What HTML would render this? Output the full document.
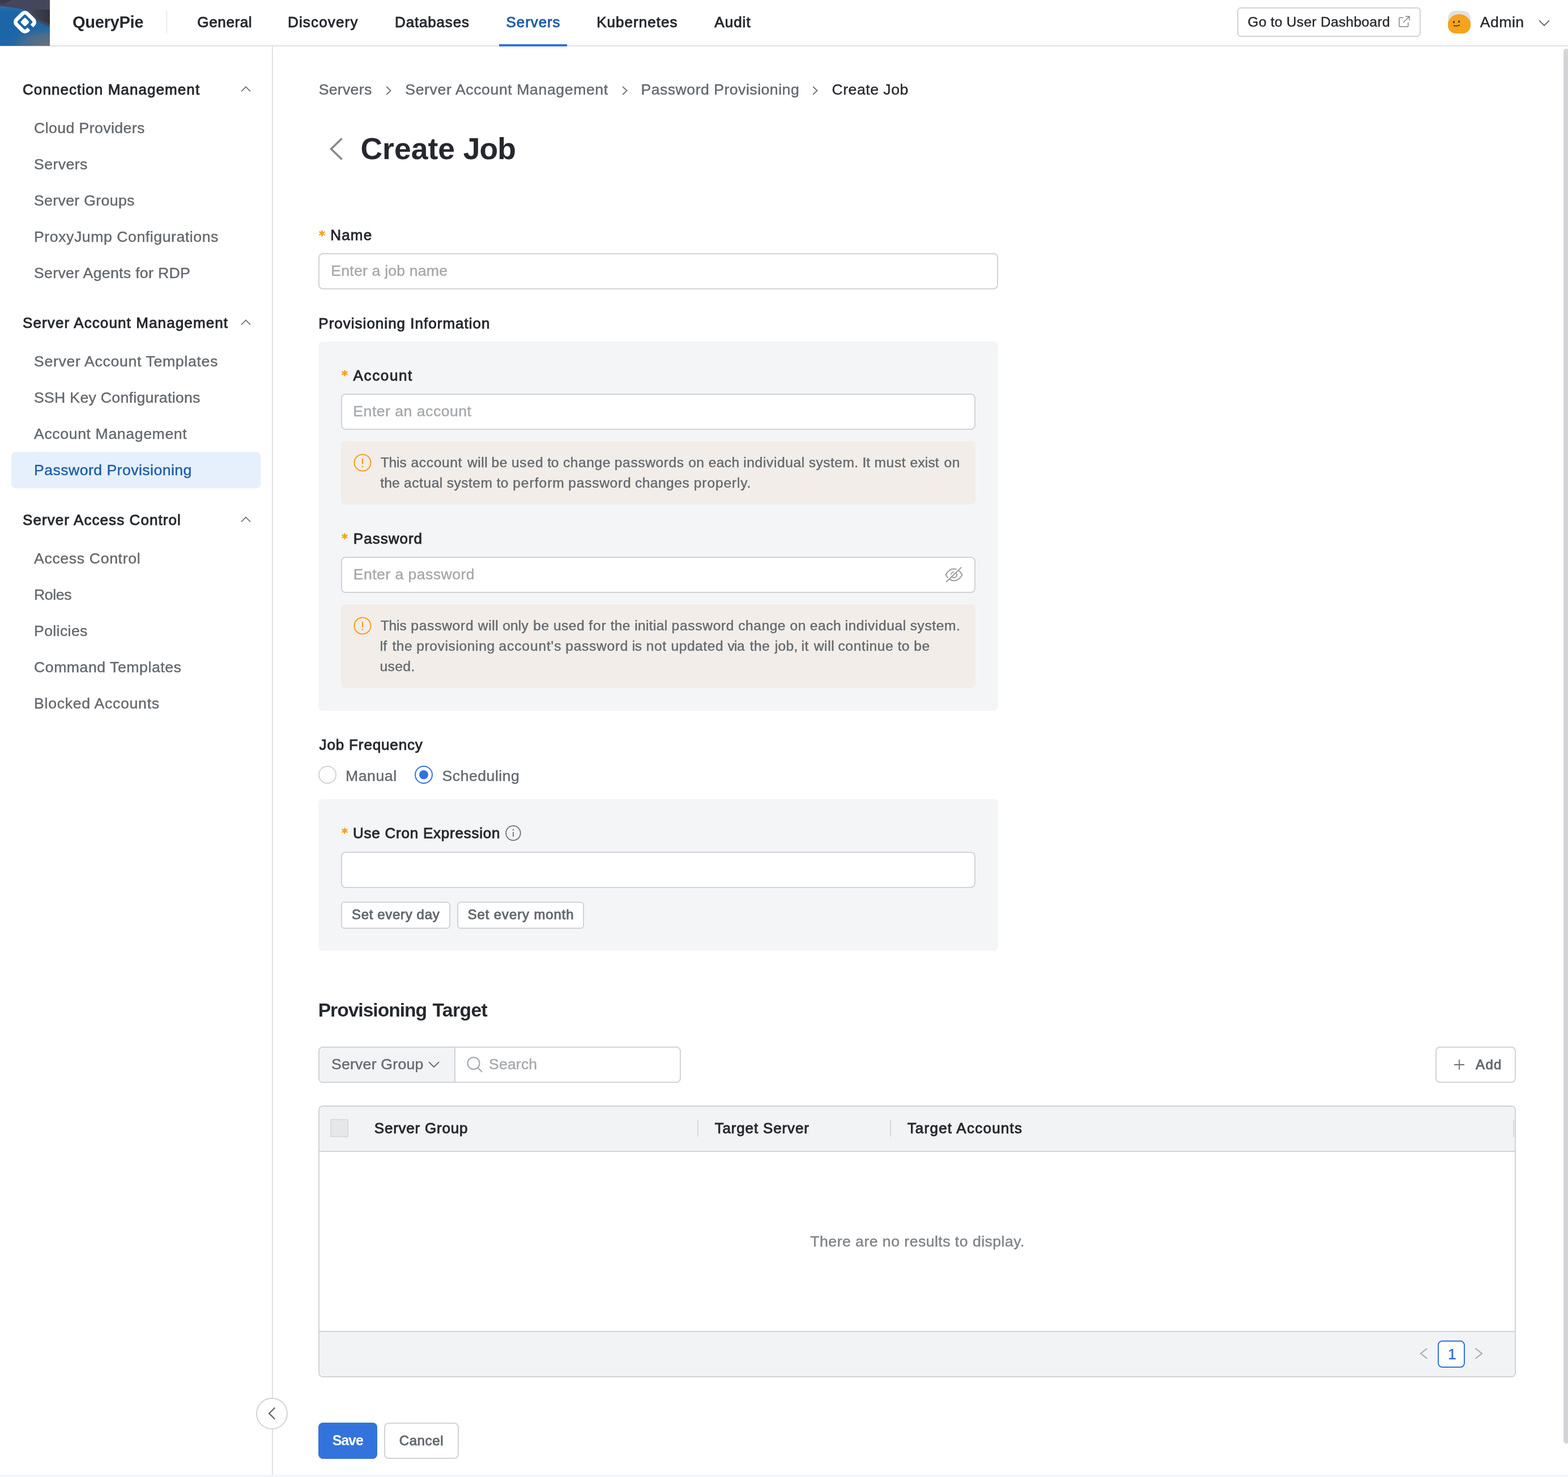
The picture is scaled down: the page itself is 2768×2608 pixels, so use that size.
<!DOCTYPE html>
<html lang="en">
<head>
<meta charset="utf-8">
<title>QueryPie - Create Job</title>
<style>
*{box-sizing:border-box;margin:0;padding:0}
html,body{width:2768px;height:2608px;overflow:hidden;background:#fff}
body{font-family:"Liberation Sans",Arial,sans-serif;font-size:27px;color:#24272c;position:relative}
#app{position:absolute;left:0;top:0;width:2768px;height:2608px;will-change:transform}
@media (max-width:1400px){html{zoom:.5}}
svg{display:block;position:absolute;overflow:visible}
a{text-decoration:none}
h1,h2{font-weight:700}
.t{position:absolute;white-space:pre;font-weight:400;display:block}
.r{-webkit-text-stroke:0.4px currentColor}
.m{-webkit-text-stroke:0.9px currentColor}
.sb{}
.b{}
.p{position:absolute}
/* header */
#hdr{left:0;top:0;width:2768px;height:82px;border-bottom:2px solid #dddfe3;background:#fff}
#logo{left:0;top:0;width:88px;height:81px;overflow:hidden;background:#1c66a8;z-index:2}
#hdiv{left:293.5px;top:19px;width:1.2px;height:40px;background:#dcdee2}
#navline{left:881px;top:78px;width:120px;height:4px;background:#3273dc}
#dash{left:2184px;top:13px;width:324px;height:52px;border:2px solid #d1d3d8;border-radius:6px;background:#fff}
#avatar{left:2556px;top:19px;width:40px;height:40px;border-radius:14px;background:#dfe1e6;overflow:hidden}
#avatar i{position:absolute;left:-1px;top:5.5px;width:42px;height:42px;border-radius:50%;background:#f7a31c}
/* sidebar */
#side{left:0;top:82px;width:482px;height:2526px;border-right:2px solid #dfe1e5;background:#fff}
#sel{left:20px;top:798px;width:440px;height:64px;border-radius:8px;background:#e6f0fc}
#collapse{left:452px;top:2468px;width:56px;height:56px;border-radius:50%;border:2px solid #d1d3d8;background:#fff}
/* content */
.inp{height:64px;border:2px solid #d1d3d8;border-radius:8px;background:#fff}
.box{left:562px;width:1200px;background:#f4f5f7;border-radius:8px}
.alert{left:602px;width:1120px;background:#f2ede8;border-radius:8px}
.sbtn{top:1592px;height:48px;border:2px solid #d1d3d8;border-radius:6px;background:#fff}
.radio{top:1352px;width:32px;height:32px;border-radius:50%;border:2px solid #d1d3d8;background:#fff}
.radio.on{border-color:#3273dc}
.radio.on i{position:absolute;left:6px;top:6px;width:16px;height:16px;border-radius:50%;background:#3273dc}
#filter{left:562px;top:1848px;width:640px;height:64px;border:2px solid #d1d3d8;border-radius:8px;background:#fff;overflow:hidden}
#filter b{position:absolute;left:0;top:0;width:240px;height:60px;background:#f2f3f5;border-right:2px solid #d1d3d8}
#addbtn{left:2534px;top:1848px;width:142px;height:64px;border:2px solid #d1d3d8;border-radius:8px;background:#fff}
#tbl{left:562px;top:1952px;width:2114px;height:480px;border:2px solid #d1d3d8;border-radius:8px;background:#fff;overflow:hidden}
#thead{left:0;top:0;width:2110px;height:80px;background:#f2f3f5;border-bottom:2px solid #d1d3d8}
#tfoot{left:0;top:396px;width:2110px;height:80px;background:#f2f3f5;border-top:2px solid #d1d3d8}
.sep{top:1977px;width:2px;height:30px;background:#d6d9de}
#chk{left:583px;top:1976px;width:32px;height:32px;background:#e6e7e9;border:2px solid #d9dbde;border-radius:1px}
#pgbox{left:2538px;top:2367px;width:48px;height:48px;border:2px solid #3273dc;border-radius:8px;background:#fff}
#save{left:562px;top:2512px;width:104px;height:64px;border-radius:8px;background:#3273dc}
#cancel{left:678px;top:2512px;width:132px;height:64px;border-radius:8px;border:2px solid #d1d3d8;background:#fff}
#vscroll{left:2760px;top:86px;width:10px;height:2463px;background:#d2d4d8;border-radius:5px}
#hstrip{left:0;top:2604px;width:2768px;height:4px;background:#f3f5f8}
.ast{position:absolute;color:#f59f1c;font-family:"DejaVu Sans",sans-serif;font-weight:700;font-size:21px;line-height:28px;width:16px;text-align:center;margin-left:-1.5px;margin-top:1.5px;-webkit-text-stroke:0.6px #f59f1c}
</style>
</head>
<body>
<div id="app">
<header class="p" id="hdr">
  <div class="p" id="logo">
    <svg width="88" height="81" viewBox="0 0 88 81">
      <defs>
        <radialGradient id="lg2" cx="1" cy="1" r="0.95"><stop offset="0" stop-color="#6b7074"/><stop offset="0.55" stop-color="#4a6d8d" stop-opacity="0.95"/><stop offset="1" stop-color="#1c66a8" stop-opacity="0"/></radialGradient>
        <linearGradient id="lg3" x1="0" y1="0" x2="1" y2="0"><stop offset="0" stop-color="#2c2d36" stop-opacity="0"/><stop offset="1" stop-color="#2c2d36" stop-opacity="0.75"/></linearGradient>
        <linearGradient id="lg4" x1="0" y1="0" x2="0" y2="1"><stop offset="0" stop-color="#2f74b4" stop-opacity="0.75"/><stop offset="1" stop-color="#1c66a8" stop-opacity="0"/></linearGradient>
      </defs>
      <rect width="88" height="81" fill="#1c66a8"/>
      <rect y="40" width="88" height="41" fill="url(#lg2)"/>
      <path d="M0 0H88V47C80 45 72 41 66 37L46 18C30 14 14 12 0 11Z" fill="#44465b"/>
      <path d="M0 11C14 12 30 14 46 18L34 26C22 22 10 20 0 19Z" fill="url(#lg4)"/>
      <path d="M52 17H88V42C80 40 72 36 66 32Z" fill="url(#lg3)"/>
      <path d="M0 0H20L6 7H0Z" fill="#2c2d36" opacity="0.5"/>
      <g transform="rotate(45 44 38.9)">
        <rect x="30.5" y="25.4" width="27" height="27" rx="6" fill="none" stroke="#fff" stroke-width="6.8"/>
        <rect x="38.2" y="33.1" width="11.6" height="11.6" rx="2.5" fill="#fff"/>
      </g>
      <path d="M50.5 45.4L57.2 52.1" stroke="#1c66a8" stroke-width="7.4" fill="none"/>
    </svg>
  </div>
  <div class="t sb" style="left:127.89px;top:22.00px;font-size:29.12px;line-height:35px;letter-spacing:-0.313px;color:#25282d;font-weight:700">QueryPie</div>
  <div class="p" id="hdiv"></div>
  <nav>
  <a class="t m" style="left:348.35px;top:24.00px;font-size:26.0px;line-height:31px;letter-spacing:0.631px;color:#25282d">General</a>
  <a class="t m" style="left:507.96px;top:24.00px;font-size:26.0px;line-height:31px;letter-spacing:1.167px;color:#25282d">Discovery</a>
  <a class="t m" style="left:697.04px;top:24.00px;font-size:26.0px;line-height:31px;letter-spacing:0.833px;color:#25282d">Databases</a>
  <a class="t m" style="left:893.60px;top:24.00px;font-size:26.0px;line-height:31px;letter-spacing:0.897px;color:#1d5daa">Servers</a>
  <a class="t m" style="left:1053.20px;top:24.00px;font-size:26.0px;line-height:31px;letter-spacing:1.043px;color:#25282d">Kubernetes</a>
  <a class="t m" style="left:1261.33px;top:24.00px;font-size:26.0px;line-height:31px;letter-spacing:1.007px;color:#25282d">Audit</a>
  </nav>
  <div class="p" id="navline"></div>
  <div class="p" id="dash"></div>
  <span class="t r" style="left:2202.53px;top:24.00px;font-size:24.6px;line-height:30px;letter-spacing:0.266px;color:#25282d">Go to User Dashboard</span>
  <svg style="left:2468px;top:27px" width="22" height="22" viewBox="0 0 22 22" fill="none" stroke="#80858c" stroke-width="1.5"><path d="M9.5 4.2H3.2Q2 4.2 2 5.4V18.8Q2 20 3.2 20H16.6Q17.8 20 17.8 18.8V12.5"/><path d="M9.2 12.8L20 2M13 2H20V9"/></svg>
  <div class="p" id="avatar"><i></i>
    <svg style="left:0;top:0" width="40" height="40" viewBox="0 0 40 40"><ellipse cx="10.5" cy="19.9" rx="1.4" ry="1.9" fill="#1c2030"/><ellipse cx="19.6" cy="19.1" rx="1.4" ry="1.9" fill="#1c2030"/><path d="M10.3 26.1Q14.5 28.1 20.7 25.4" stroke="#1c2030" stroke-width="1.3" fill="none" stroke-linecap="round"/></svg>
  </div>
  <span class="t r" style="left:2612.86px;top:23.00px;font-size:26.65px;line-height:32px;letter-spacing:0.421px;color:#25282d">Admin</span>
  <svg style="left:2716px;top:35px" width="20" height="11" viewBox="0 0 20 11" fill="none" stroke="#6c7178" stroke-width="2"><path d="M1 1L10 10L19 1"/></svg>
</header>
<aside class="p" id="side"></aside>
<div class="p" id="sel"></div>
<nav id="sidenav">
<div class="t m" style="left:40.00px;top:143.00px;font-size:26.0px;line-height:31px;letter-spacing:1.079px;color:#25282d">Connection Management</div>
<svg style="left:425px;top:152px" width="18" height="10" viewBox="0 0 18 10" fill="none" stroke="#6e7379" stroke-width="1.7"><path d="M1 9.3L9 1.3L17 9.3"/></svg>
<a class="t r" style="left:60.00px;top:210.00px;font-size:26.65px;line-height:32px;letter-spacing:0.416px;color:#63686e">Cloud Providers</a>
<a class="t r" style="left:60.00px;top:274.00px;font-size:26.65px;line-height:32px;letter-spacing:0.436px;color:#63686e">Servers</a>
<a class="t r" style="left:60.00px;top:338.00px;font-size:26.65px;line-height:32px;letter-spacing:0.347px;color:#63686e">Server Groups</a>
<a class="t r" style="left:60.00px;top:402.00px;font-size:26.65px;line-height:32px;letter-spacing:0.564px;color:#63686e">ProxyJump Configurations</a>
<a class="t r" style="left:60.00px;top:466.00px;font-size:26.65px;line-height:32px;letter-spacing:0.315px;color:#63686e">Server Agents for RDP</a>
<div class="t m" style="left:40.00px;top:555.00px;font-size:26.0px;line-height:31px;letter-spacing:1.115px;color:#25282d">Server Account Management</div>
<svg style="left:425px;top:564px" width="18" height="10" viewBox="0 0 18 10" fill="none" stroke="#6e7379" stroke-width="1.7"><path d="M1 9.3L9 1.3L17 9.3"/></svg>
<a class="t r" style="left:60.00px;top:622.00px;font-size:26.65px;line-height:32px;letter-spacing:0.665px;color:#63686e">Server Account Templates</a>
<a class="t r" style="left:60.00px;top:686.00px;font-size:26.65px;line-height:32px;letter-spacing:0.292px;color:#63686e">SSH Key Configurations</a>
<a class="t r" style="left:60.00px;top:750.00px;font-size:26.65px;line-height:32px;letter-spacing:0.618px;color:#63686e">Account Management</a>
<a class="t r" style="left:60.00px;top:814.00px;font-size:26.65px;line-height:32px;letter-spacing:0.445px;color:#1d5daa">Password Provisioning</a>
<div class="t m" style="left:40.00px;top:903.00px;font-size:26.0px;line-height:31px;letter-spacing:1.084px;color:#25282d">Server Access Control</div>
<svg style="left:425px;top:912px" width="18" height="10" viewBox="0 0 18 10" fill="none" stroke="#6e7379" stroke-width="1.7"><path d="M1 9.3L9 1.3L17 9.3"/></svg>
<a class="t r" style="left:60.00px;top:970.00px;font-size:26.65px;line-height:32px;letter-spacing:0.646px;color:#63686e">Access Control</a>
<a class="t r" style="left:60.00px;top:1034.00px;font-size:26.65px;line-height:32px;letter-spacing:-0.385px;color:#63686e">Roles</a>
<a class="t r" style="left:60.00px;top:1098.00px;font-size:26.65px;line-height:32px;letter-spacing:0.372px;color:#63686e">Policies</a>
<a class="t r" style="left:60.00px;top:1162.00px;font-size:26.65px;line-height:32px;letter-spacing:0.539px;color:#63686e">Command Templates</a>
<a class="t r" style="left:60.00px;top:1226.00px;font-size:26.65px;line-height:32px;letter-spacing:0.720px;color:#63686e">Blocked Accounts</a>
</nav>
<main>
<a class="t r" style="left:562.65px;top:142.00px;font-size:26.65px;line-height:32px;letter-spacing:0.301px;color:#63686e">Servers</a>
<svg style="left:681px;top:152px" width="10" height="16" viewBox="0 0 10 16" fill="none" stroke="#6c7178" stroke-width="1.8"><path d="M1.2 1L8.6 8L1.2 15"/></svg>
<a class="t r" style="left:715.32px;top:142.00px;font-size:26.65px;line-height:32px;letter-spacing:0.596px;color:#63686e">Server Account Management</a>
<svg style="left:1098px;top:152px" width="10" height="16" viewBox="0 0 10 16" fill="none" stroke="#6c7178" stroke-width="1.8"><path d="M1.2 1L8.6 8L1.2 15"/></svg>
<a class="t r" style="left:1131.41px;top:142.00px;font-size:26.65px;line-height:32px;letter-spacing:0.490px;color:#63686e">Password Provisioning</a>
<svg style="left:1434px;top:152px" width="10" height="16" viewBox="0 0 10 16" fill="none" stroke="#6c7178" stroke-width="1.8"><path d="M1.2 1L8.6 8L1.2 15"/></svg>
<span class="t r" style="left:1468.52px;top:142.00px;font-size:26.65px;line-height:32px;letter-spacing:0.497px;color:#25282d">Create Job</span>
<svg style="left:582px;top:243px" width="23" height="40" viewBox="0 0 23 40" fill="none" stroke="#868a8f" stroke-width="3.6"><path d="M21.5 1.5L2.5 20L21.5 38.5"/></svg>
<h1><span class="t b" style="left:636.43px;top:231.00px;font-size:53.55px;line-height:64px;letter-spacing:0.007px;color:#25282d;font-weight:700">Create </span><span class="t b" style="left:817.77px;top:231.00px;font-size:53.55px;line-height:64px;letter-spacing:-0.950px;color:#25282d;font-weight:700">Job</span></h1>
<span class="ast" style="left:562px;top:400px">*</span>
<label class="t m" style="left:583.20px;top:400.00px;font-size:26.0px;line-height:31px;letter-spacing:1.212px;color:#25282d">Name</label>
<div class="p inp" style="left:562px;top:447px;width:1200px"></div>
<span class="t r" style="left:584.36px;top:462.00px;font-size:26.65px;line-height:32px;letter-spacing:0.186px;color:#a4a8ad">Enter a job name</span>
<div class="t m" style="left:562.29px;top:556.00px;font-size:26.0px;line-height:31px;letter-spacing:1.015px;color:#25282d">Provisioning Information</div>
<section class="p box" style="top:603px;height:652px"></section>
<span class="ast" style="left:602px;top:647px">*</span>
<label class="t m" style="left:623.62px;top:648.00px;font-size:26.0px;line-height:31px;letter-spacing:1.620px;color:#25282d">Account</label>
<div class="p inp" style="left:602px;top:695px;width:1120px"></div>
<span class="t r" style="left:623.36px;top:710.00px;font-size:26.65px;line-height:32px;letter-spacing:0.481px;color:#a4a8ad">Enter an account</span>
<div class="p alert" style="top:779px;height:112px"></div>
<svg style="left:624px;top:801px" width="32" height="32" viewBox="0 0 32 32" fill="none" stroke="#f59f1c" stroke-width="2"><circle cx="16" cy="16" r="14.6"/><path d="M16 8.5V18.5" stroke-width="2.2"/><circle cx="16" cy="22.6" r="1.4" fill="#f59f1c" stroke="none"/></svg>
<p><span class="t r" style="left:671.69px;top:802.00px;font-size:24.6px;line-height:30px;letter-spacing:-0.142px;color:#63686e">This </span><span class="t r" style="left:725.54px;top:802.00px;font-size:24.6px;line-height:30px;letter-spacing:0.620px;color:#63686e">account </span><span class="t r" style="left:825.10px;top:802.00px;font-size:24.6px;line-height:30px;letter-spacing:0.455px;color:#63686e">will </span><span class="t r" style="left:867.60px;top:802.00px;font-size:24.6px;line-height:30px;letter-spacing:0.413px;color:#63686e">be </span><span class="t r" style="left:902.93px;top:802.00px;font-size:24.6px;line-height:30px;letter-spacing:0.772px;color:#63686e">used </span><span class="t r" style="left:966.25px;top:802.00px;font-size:24.6px;line-height:30px;letter-spacing:-0.413px;color:#63686e">to </span><span class="t r" style="left:994.04px;top:802.00px;font-size:24.6px;line-height:30px;letter-spacing:0.525px;color:#63686e">change </span><span class="t r" style="left:1084.87px;top:802.00px;font-size:24.6px;line-height:30px;letter-spacing:0.585px;color:#63686e">passwords </span><span class="t r" style="left:1215.29px;top:802.00px;font-size:24.6px;line-height:30px;letter-spacing:0.263px;color:#63686e">on </span><span class="t r" style="left:1250.68px;top:802.00px;font-size:24.6px;line-height:30px;letter-spacing:0.423px;color:#63686e">each </span><span class="t r" style="left:1312.25px;top:802.00px;font-size:24.6px;line-height:30px;letter-spacing:0.612px;color:#63686e">individual </span><span class="t r" style="left:1427.77px;top:802.00px;font-size:24.6px;line-height:30px;letter-spacing:0.450px;color:#63686e">system. </span><span class="t r" style="left:1522.47px;top:802.00px;font-size:24.6px;line-height:30px;letter-spacing:-0.088px;color:#63686e">It </span><span class="t r" style="left:1543.48px;top:802.00px;font-size:24.6px;line-height:30px;letter-spacing:0.635px;color:#63686e">must </span><span class="t r" style="left:1606.58px;top:802.00px;font-size:24.6px;line-height:30px;letter-spacing:0.132px;color:#63686e">exist </span><span class="t r" style="left:1666.58px;top:802.00px;font-size:24.6px;line-height:30px;letter-spacing:0.535px;color:#63686e">on </span><span class="t r" style="left:671.28px;top:838.00px;font-size:24.6px;line-height:30px;letter-spacing:0.110px;color:#63686e">the </span><span class="t r" style="left:713.11px;top:838.00px;font-size:24.6px;line-height:30px;letter-spacing:0.512px;color:#63686e">actual </span><span class="t r" style="left:788.77px;top:838.00px;font-size:24.6px;line-height:30px;letter-spacing:0.470px;color:#63686e">system </span><span class="t r" style="left:876.69px;top:838.00px;font-size:24.6px;line-height:30px;letter-spacing:0.221px;color:#63686e">to </span><span class="t r" style="left:905.13px;top:838.00px;font-size:24.6px;line-height:30px;letter-spacing:0.990px;color:#63686e">perform </span><span class="t r" style="left:1003.37px;top:838.00px;font-size:24.6px;line-height:30px;letter-spacing:0.706px;color:#63686e">password </span><span class="t r" style="left:1120.88px;top:838.00px;font-size:24.6px;line-height:30px;letter-spacing:0.477px;color:#63686e">changes </span><span class="t r" style="left:1224.84px;top:838.00px;font-size:24.6px;line-height:30px;letter-spacing:0.844px;color:#63686e">properly.</span></p>
<span class="ast" style="left:602px;top:935.6px">*</span>
<label class="t m" style="left:623.83px;top:936.00px;font-size:26.0px;line-height:31px;letter-spacing:1.010px;color:#25282d">Password</label>
<div class="p inp" style="left:602px;top:983px;width:1120px"></div>
<span class="t r" style="left:623.70px;top:998.00px;font-size:26.65px;line-height:32px;letter-spacing:0.445px;color:#a4a8ad">Enter a password</span>
<svg style="left:1664px;top:996px" width="40" height="36" viewBox="0 0 40 36" fill="none" stroke="#989ca1" stroke-width="2" stroke-linejoin="round"><path d="M5.6 19C9 13 14 8.6 20 8.6C26 8.6 31 13 34.6 19C31 25 26 29.4 20 29.4C14 29.4 9 25 5.6 19Z"/><circle cx="20" cy="19" r="5"/><path d="M4.74 30.29L31.84 4.09" stroke="#fff" stroke-width="2.2"/><path d="M6.2 31.8L33.3 5.6"/></svg>
<div class="p alert" style="top:1067px;height:148px"></div>
<svg style="left:624px;top:1089px" width="32" height="32" viewBox="0 0 32 32" fill="none" stroke="#f59f1c" stroke-width="2"><circle cx="16" cy="16" r="14.6"/><path d="M16 8.5V18.5" stroke-width="2.2"/><circle cx="16" cy="22.6" r="1.4" fill="#f59f1c" stroke="none"/></svg>
<p><span class="t r" style="left:671.69px;top:1090.00px;font-size:24.6px;line-height:30px;letter-spacing:-0.142px;color:#63686e">This </span><span class="t r" style="left:725.35px;top:1090.00px;font-size:24.6px;line-height:30px;letter-spacing:0.710px;color:#63686e">password </span><span class="t r" style="left:843.86px;top:1090.00px;font-size:24.6px;line-height:30px;letter-spacing:0.534px;color:#63686e">will </span><span class="t r" style="left:887.13px;top:1090.00px;font-size:24.6px;line-height:30px;letter-spacing:0.168px;color:#63686e">only </span><span class="t r" style="left:941.31px;top:1090.00px;font-size:24.6px;line-height:30px;letter-spacing:0.413px;color:#63686e">be </span><span class="t r" style="left:976.93px;top:1090.00px;font-size:24.6px;line-height:30px;letter-spacing:0.481px;color:#63686e">used </span><span class="t r" style="left:1039.34px;top:1090.00px;font-size:24.6px;line-height:30px;letter-spacing:0.870px;color:#63686e">for </span><span class="t r" style="left:1077.69px;top:1090.00px;font-size:24.6px;line-height:30px;letter-spacing:0.332px;color:#63686e">the </span><span class="t r" style="left:1120.35px;top:1090.00px;font-size:24.6px;line-height:30px;letter-spacing:0.288px;color:#63686e">initial </span><span class="t r" style="left:1185.60px;top:1090.00px;font-size:24.6px;line-height:30px;letter-spacing:0.670px;color:#63686e">password </span><span class="t r" style="left:1303.23px;top:1090.00px;font-size:24.6px;line-height:30px;letter-spacing:0.524px;color:#63686e">change </span><span class="t r" style="left:1394.58px;top:1090.00px;font-size:24.6px;line-height:30px;letter-spacing:0.535px;color:#63686e">on </span><span class="t r" style="left:1429.85px;top:1090.00px;font-size:24.6px;line-height:30px;letter-spacing:0.520px;color:#63686e">each </span><span class="t r" style="left:1491.53px;top:1090.00px;font-size:24.6px;line-height:30px;letter-spacing:0.581px;color:#63686e">individual </span><span class="t r" style="left:1606.77px;top:1090.00px;font-size:24.6px;line-height:30px;letter-spacing:0.559px;color:#63686e">system. </span><span class="t r" style="left:669.99px;top:1126.00px;font-size:24.6px;line-height:30px;letter-spacing:-0.556px;color:#63686e">If </span><span class="t r" style="left:692.50px;top:1126.00px;font-size:24.6px;line-height:30px;letter-spacing:0.499px;color:#63686e">the </span><span class="t r" style="left:735.13px;top:1126.00px;font-size:24.6px;line-height:30px;letter-spacing:0.613px;color:#63686e">provisioning </span><span class="t r" style="left:880.54px;top:1126.00px;font-size:24.6px;line-height:30px;letter-spacing:0.850px;color:#63686e">account's </span><span class="t r" style="left:998.37px;top:1126.00px;font-size:24.6px;line-height:30px;letter-spacing:0.703px;color:#63686e">password </span><span class="t r" style="left:1115.78px;top:1126.00px;font-size:24.6px;line-height:30px;letter-spacing:-0.441px;color:#63686e">is </span><span class="t r" style="left:1140.70px;top:1126.00px;font-size:24.6px;line-height:30px;letter-spacing:0.632px;color:#63686e">not </span><span class="t r" style="left:1184.46px;top:1126.00px;font-size:24.6px;line-height:30px;letter-spacing:0.535px;color:#63686e">updated </span><span class="t r" style="left:1284.53px;top:1126.00px;font-size:24.6px;line-height:30px;letter-spacing:-0.693px;color:#63686e">via </span><span class="t r" style="left:1323.83px;top:1126.00px;font-size:24.6px;line-height:30px;letter-spacing:0.333px;color:#63686e">the </span><span class="t r" style="left:1367.66px;top:1126.00px;font-size:24.6px;line-height:30px;letter-spacing:0.341px;color:#63686e">job, </span><span class="t r" style="left:1414.61px;top:1126.00px;font-size:24.6px;line-height:30px;letter-spacing:0.491px;color:#63686e">it </span><span class="t r" style="left:1436.74px;top:1126.00px;font-size:24.6px;line-height:30px;letter-spacing:0.629px;color:#63686e">will </span><span class="t r" style="left:1479.47px;top:1126.00px;font-size:24.6px;line-height:30px;letter-spacing:0.608px;color:#63686e">continue </span><span class="t r" style="left:1584.69px;top:1126.00px;font-size:24.6px;line-height:30px;letter-spacing:0.221px;color:#63686e">to </span><span class="t r" style="left:1613.16px;top:1126.00px;font-size:24.6px;line-height:30px;letter-spacing:0.570px;color:#63686e">be </span><span class="t r" style="left:670.46px;top:1162.00px;font-size:24.6px;line-height:30px;letter-spacing:0.411px;color:#63686e">used.</span></p>
<div class="t m" style="left:563.56px;top:1300.00px;font-size:26.0px;line-height:31px;letter-spacing:0.858px;color:#25282d">Job Frequency</div>
<div class="p radio" style="left:562px"></div>
<label class="t r" style="left:609.92px;top:1354.00px;font-size:26.65px;line-height:32px;letter-spacing:0.561px;color:#63686e">Manual</label>
<div class="p radio on" style="left:732px"><i></i></div>
<label class="t r" style="left:780.58px;top:1354.00px;font-size:26.65px;line-height:32px;letter-spacing:0.492px;color:#63686e">Scheduling</label>
<section class="p box" style="top:1411px;height:268px"></section>
<span class="ast" style="left:602px;top:1455px">*</span>
<label class="t m" style="left:623.01px;top:1456.00px;font-size:26.0px;line-height:31px;letter-spacing:0.766px;color:#25282d">Use Cron Expression</label>
<svg style="left:892px;top:1456.5px" width="28" height="28" viewBox="0 0 28 28" fill="none" stroke="#6c7178" stroke-width="1.8"><circle cx="14" cy="14" r="12.8"/><path d="M14 12V20.5"/><circle cx="14" cy="8.3" r="1.2" fill="#6c7178" stroke="none"/></svg>
<div class="p inp" style="left:602px;top:1504px;width:1120px"></div>
<div class="p sbtn" style="left:602px;width:193px"></div>
<span class="t m" style="left:620.99px;top:1600.00px;font-size:24.0px;line-height:29px;letter-spacing:0.659px;color:#63686e">Set every day</span>
<div class="p sbtn" style="left:807px;width:224px"></div>
<span class="t m" style="left:825.63px;top:1600.00px;font-size:24.0px;line-height:29px;letter-spacing:0.881px;color:#63686e">Set every month</span>
<h2><span class="t b" style="left:561.68px;top:1764.00px;font-size:33.6px;line-height:40px;letter-spacing:-1.001px;color:#25282d;font-weight:700">Provisioning </span><span class="t b" style="left:763.41px;top:1764.00px;font-size:33.6px;line-height:40px;letter-spacing:-0.565px;color:#25282d;font-weight:700">Target</span></h2>
<div class="p" id="filter"><b></b></div>
<span class="t r" style="left:584.98px;top:1863.00px;font-size:26.65px;line-height:32px;letter-spacing:0.217px;color:#63686e">Server Group</span>
<svg style="left:756px;top:1874px" width="20" height="11" viewBox="0 0 20 11" fill="none" stroke="#6c7178" stroke-width="2"><path d="M1 1L10 10L19 1"/></svg>
<svg style="left:824px;top:1865px" width="28" height="29" viewBox="0 0 28 29" fill="none" stroke="#a0a5aa" stroke-width="2"><circle cx="12" cy="12.5" r="10.5"/><path d="M19.8 20.5L27 28"/></svg>
<span class="t r" style="left:863.00px;top:1863.00px;font-size:26.65px;line-height:32px;letter-spacing:0.151px;color:#a4a8ad">Search</span>
<div class="p" id="addbtn"></div>
<svg style="left:2566px;top:1870px" width="20" height="20" viewBox="0 0 20 20" fill="none" stroke="#6c7178" stroke-width="1.8"><path d="M10 1V19M1 10H19"/></svg>
<span class="t m" style="left:2605.12px;top:1865.00px;font-size:24.0px;line-height:29px;letter-spacing:1.270px;color:#63686e">Add</span>
<div class="p" id="tbl"><div class="p" id="thead"></div><div class="p" id="tfoot"></div></div>
<div class="p" id="chk"></div>
<span class="t m" style="left:660.79px;top:1977.00px;font-size:26.0px;line-height:31px;letter-spacing:0.774px;color:#25282d">Server Group</span>
<div class="p sep" style="left:1231px"></div>
<span class="t m" style="left:1261.63px;top:1977.00px;font-size:26.0px;line-height:31px;letter-spacing:0.851px;color:#25282d">Target Server</span>
<div class="p sep" style="left:1571px"></div>
<span class="t m" style="left:1601.63px;top:1977.00px;font-size:26.0px;line-height:31px;letter-spacing:1.242px;color:#25282d">Target Accounts</span>
<div class="p sep" style="left:2671px"></div>
<span class="t r" style="left:1430.35px;top:2176.00px;font-size:26.65px;line-height:32px;letter-spacing:0.463px;color:#7e8287">There are no results to display.</span>
<svg style="left:2506px;top:2380px" width="15" height="20" viewBox="0 0 15 20" fill="none" stroke="#a9adb2" stroke-width="2.2"><path d="M13.5 1L2 10L13.5 19"/></svg>
<div class="p" id="pgbox"></div>
<span class="t r" style="left:2555.94px;top:2375.00px;font-size:26.65px;line-height:32px;letter-spacing:0.000px;color:#2f6fdb">1</span>
<svg style="left:2603px;top:2380px" width="15" height="20" viewBox="0 0 15 20" fill="none" stroke="#a9adb2" stroke-width="2.2"><path d="M1.5 1L13 10L1.5 19"/></svg>
<div class="p" id="save"></div>
<span class="t sb" style="left:586.69px;top:2528.00px;font-size:24.96px;line-height:30px;letter-spacing:-1.067px;color:#ffffff;font-weight:700">Save</span>
<div class="p" id="cancel"></div>
<span class="t m" style="left:704.69px;top:2529.00px;font-size:24.0px;line-height:29px;letter-spacing:0.617px;color:#63686e">Cancel</span>
</main>
<div class="p" id="collapse"><svg style="left:17px;top:14px" width="16" height="24" viewBox="0 0 16 24" fill="none" stroke="#656a70" stroke-width="2.4"><path d="M14.3 1.5L4.1 11.7L14.3 22"/></svg></div>
<div class="p" id="vscroll"></div>
<div class="p" id="hstrip"></div>
</div>
</body>
</html>
